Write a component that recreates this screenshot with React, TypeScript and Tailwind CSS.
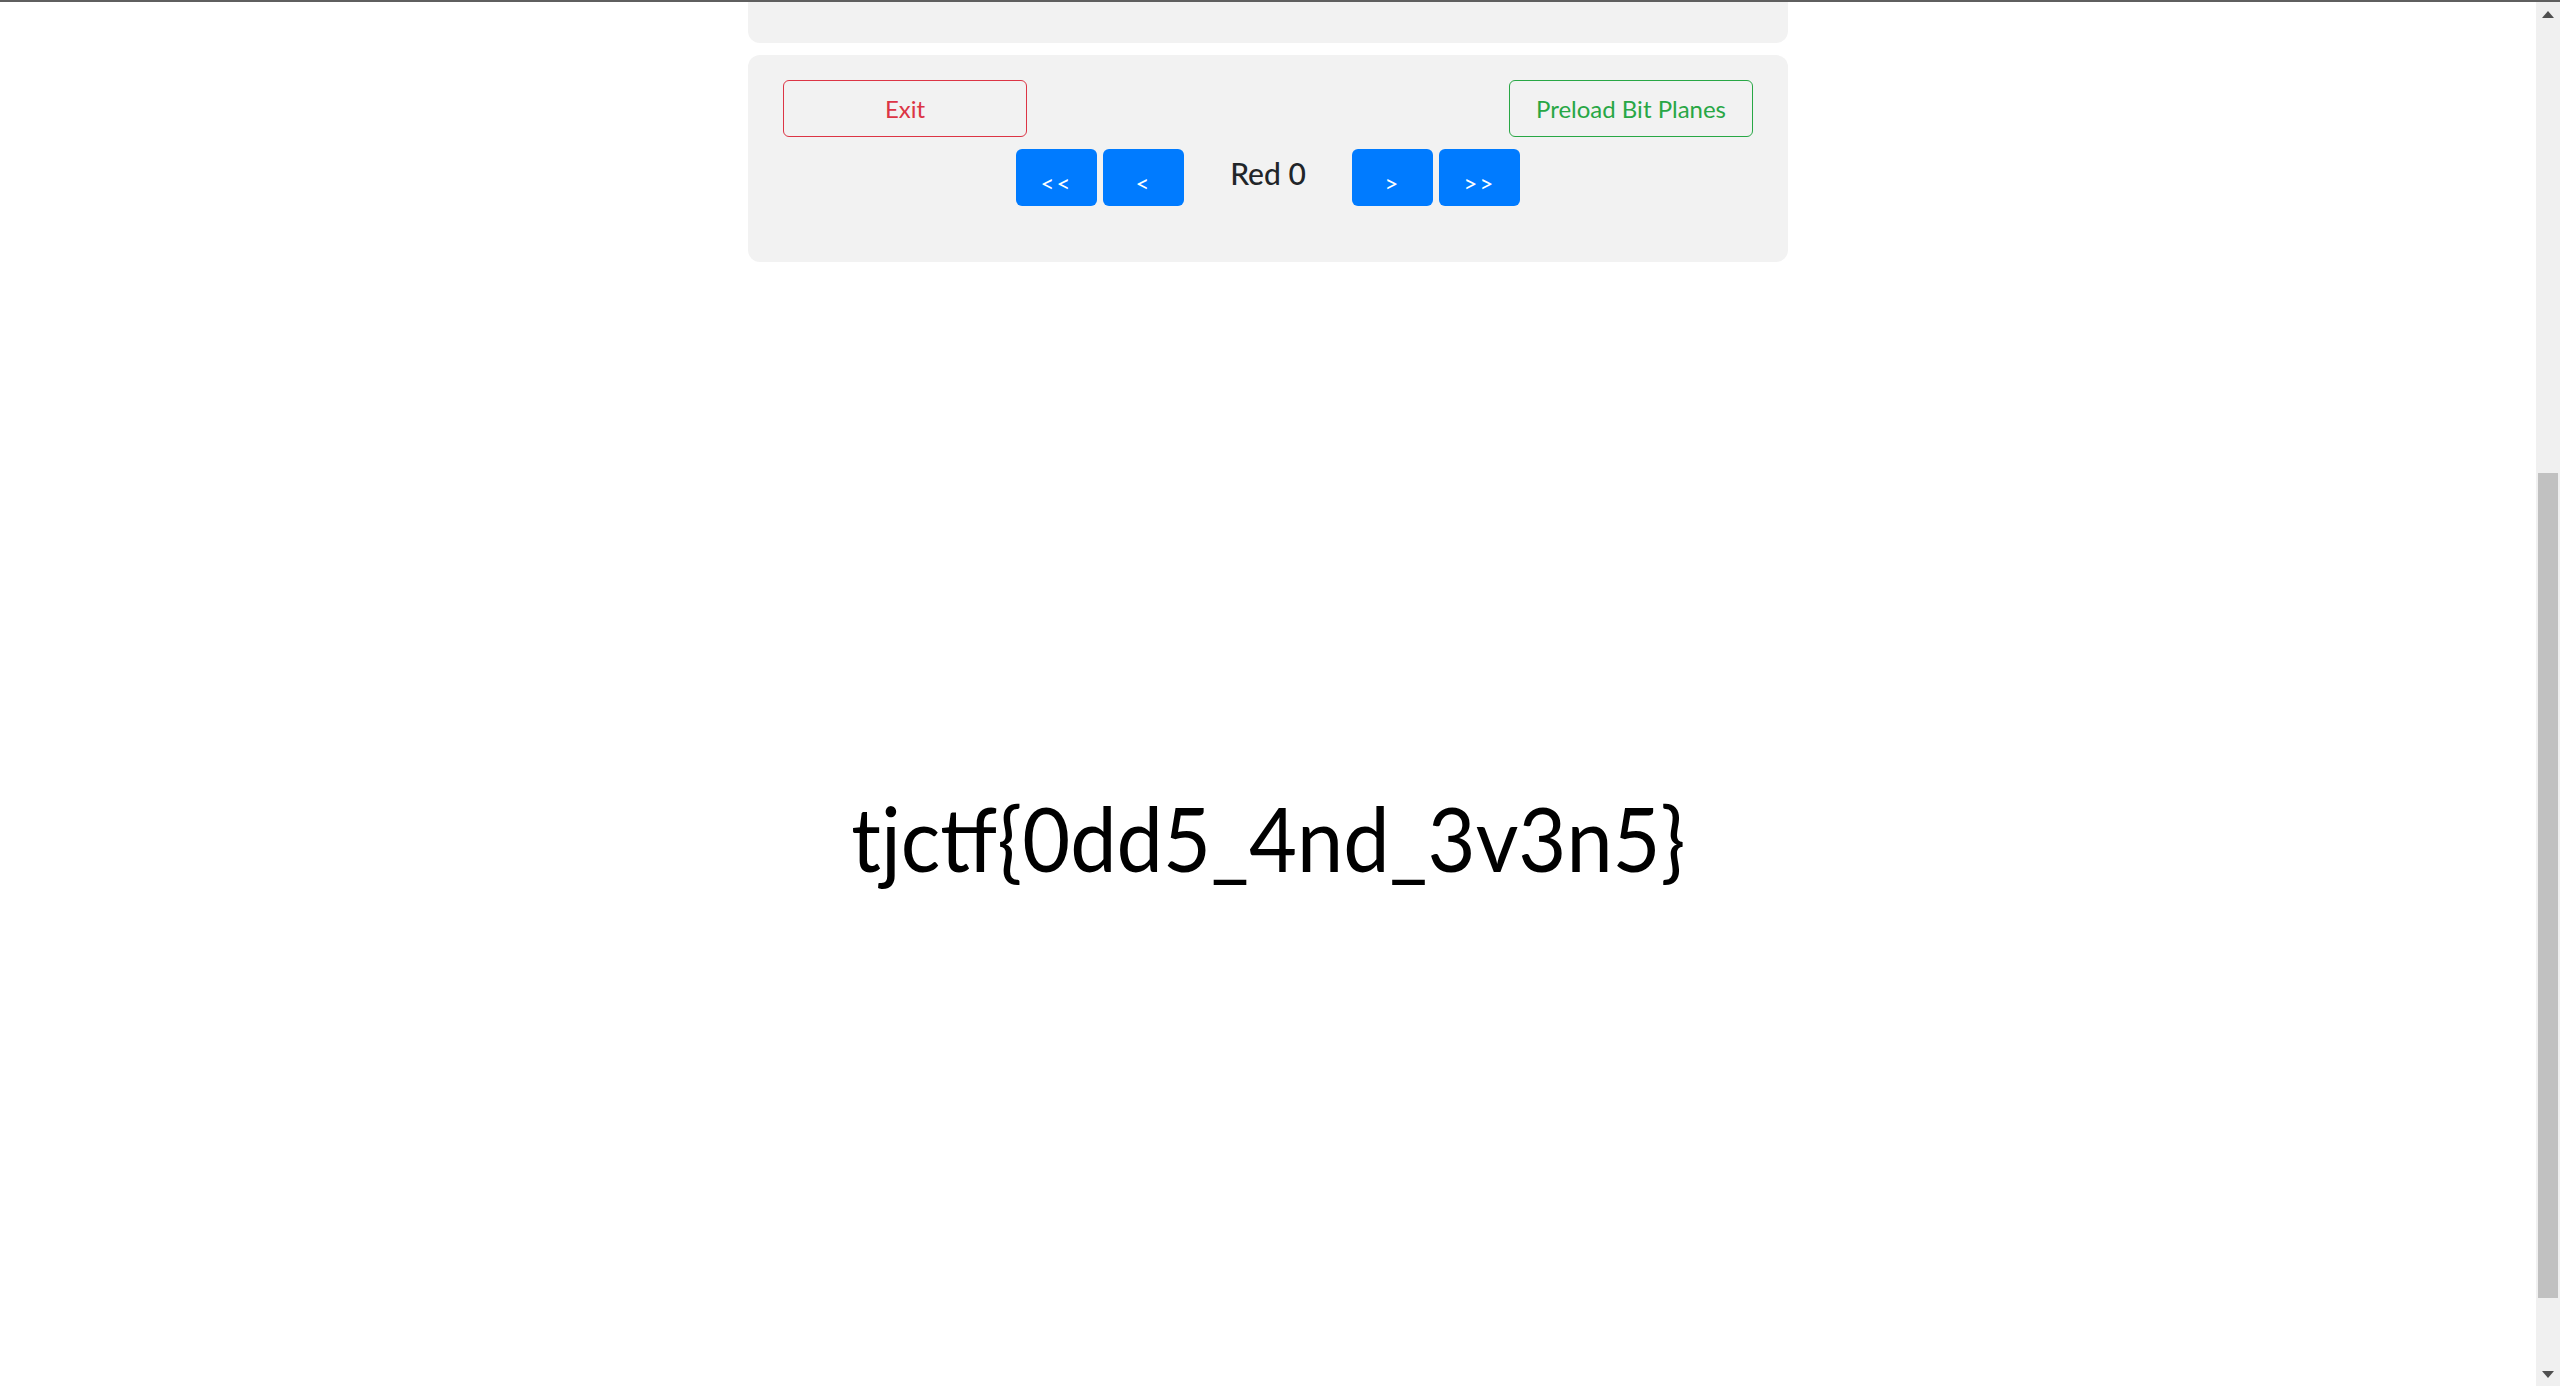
import React from "react";

const font = { fontFamily: '"Lato", "Noto Sans", sans-serif' };

function NavButton({ label }: { label: string }) {
    return (
        <button className="w-[81px] h-[57px] rounded-[6px] bg-[#007bff] text-white text-[24px] flex items-center justify-center pt-[10px] tracking-[2px]">
            {label}
        </button>
    );
}

function Scrollbar() {
    return (
        <div className="w-[24px] h-full bg-[#f0f0f0] flex flex-col items-center shrink-0">
            <div className="h-[24px] flex items-center justify-center">
                <svg width="12" height="7" viewBox="0 0 12 7"><path d="M6 0 L12 7 L0 7 Z" fill="#505050" /></svg>
            </div>
            <div className="flex-1 w-full px-[2px] pt-[447px] pb-[64px]">
                <div className="w-full h-full bg-[#c1c1c1]" />
            </div>
            <div className="h-[24px] flex items-center justify-center">
                <svg width="12" height="7" viewBox="0 0 12 7"><path d="M0 0 L12 0 L6 7 Z" fill="#505050" /></svg>
            </div>
        </div>
    );
}

export default function App() {
    return (
        <div className="w-[2560px] h-[1386px] flex bg-white overflow-hidden border-t-[2px] border-[#5f5f5f]" style={font}>
            <div className="flex-1 flex flex-col items-center">
                <div className="w-[1040px] h-[41px] bg-[#f2f2f2] rounded-b-[12px]" />
                <div className="w-[1040px] mt-[12px] bg-[#f2f2f2] rounded-[12px] px-[35px] pt-[25px] pb-[56px] flex flex-col gap-[12px]">
                    <div className="flex justify-between">
                        <button className="w-[244px] h-[57px] border border-[#dc3545] rounded-[6px] text-[#dc3545] text-[24px]">
                            Exit
                        </button>
                        <button className="w-[244px] h-[57px] border border-[#28a745] rounded-[6px] text-[#28a745] text-[24px]">
                            Preload Bit Planes
                        </button>
                    </div>
                    <div className="flex justify-center items-center gap-[6px]">
                        <NavButton label="<<" />
                        <NavButton label="<" />
                        <div className="w-[156px] text-center text-[30px] font-medium text-[#212529] pb-[8px]">Red 0</div>
                        <NavButton label=">" />
                        <NavButton label=">>" />
                    </div>
                </div>
                <div className="mt-[530px] text-[90px] leading-none text-black">
                    <span className="inline-block scale-x-[0.92]">tjctf{"{"}0dd5_4nd_3v3n5{"}"}</span>
                </div>
            </div>
            <Scrollbar />
        </div>
    );
}
